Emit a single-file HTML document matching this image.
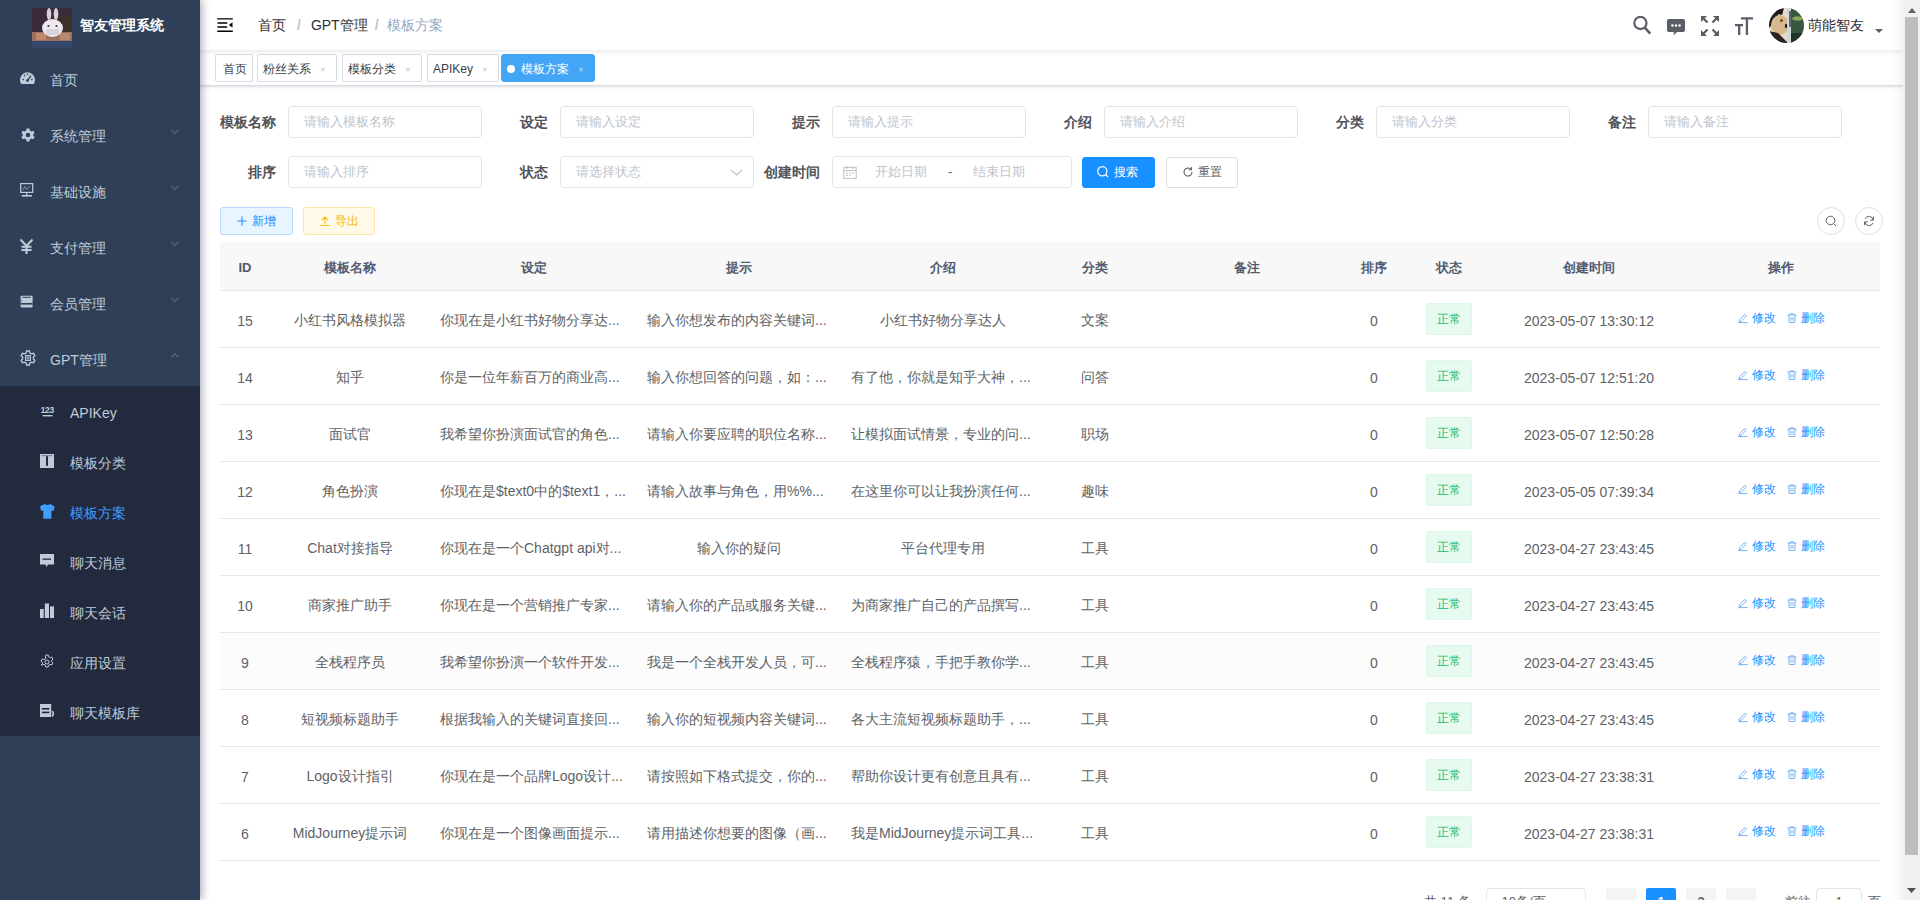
<!DOCTYPE html>
<html lang="zh">
<head>
<meta charset="utf-8">
<title>模板方案</title>
<style>
*{box-sizing:border-box;margin:0;padding:0}
html,body{width:1920px;height:900px;overflow:hidden;background:#fff}
body{font-family:"Liberation Sans",sans-serif;font-size:14px;color:#606266;position:relative}
svg{display:block}
/* ---------- sidebar ---------- */
#sb{position:absolute;left:0;top:0;width:200px;height:900px;background:#2e3f57;box-shadow:2px 0 8px rgba(0,21,41,.35);z-index:5}
#logo{position:absolute;left:0;top:0;width:200px;height:50px}
#logo .img{position:absolute;left:32px;top:8px;width:40px;height:40px}
#logo .t{position:absolute;left:80px;top:0;line-height:50px;font-size:14px;font-weight:700;color:#fff;white-space:nowrap}
.mi{position:absolute;left:0;width:200px;height:56px;color:#bfcbd9;font-size:14px}
.mi .ic{position:absolute;left:20px;top:21px;width:16px;height:16px}
.mi .tx{position:absolute;left:50px;top:2px;line-height:56px;white-space:nowrap}
.mi .ar{position:absolute;left:170px;top:22px;width:10px;height:7px}
#sub{position:absolute;left:0;top:386px;width:200px;height:350px;background:#232a3e}
.si{position:absolute;left:0;width:200px;height:50px;color:#bfcbd9;font-size:14px}
.si .ic{position:absolute;left:40px;top:17px;width:16px;height:16px}
.si .tx{position:absolute;left:70px;top:2px;line-height:50px;white-space:nowrap}
.si.act{color:#409eff}
/* ---------- navbar ---------- */
#nav{position:absolute;left:200px;top:0;width:1703px;height:50px;background:#fff;box-shadow:0 1px 5px rgba(0,21,41,.12);z-index:3}
#ham{position:absolute;left:15px;top:15px;width:20px;height:20px}
#bc{position:absolute;left:58px;top:0;line-height:50px;font-size:14px;white-space:nowrap}
#bc .a{color:#303133}
#bc .s{color:#c0c4cc;margin:0 9px;font-weight:700}
#bc .l{color:#97a8be}
.ni{position:absolute;top:16px;width:18px;height:18px;color:#5a5e66}
#avatar{position:absolute;left:1569px;top:8px;width:35px;height:35px;border-radius:50%;overflow:hidden}
#uname{position:absolute;left:1608px;top:0;line-height:50px;font-size:14px;color:#303133;white-space:nowrap}
#caret{position:absolute;left:1675px;top:29px;width:0;height:0;border-left:4.5px solid transparent;border-right:4.5px solid transparent;border-top:4.5px solid #5a5e66}
/* ---------- tags ---------- */
#tags{position:absolute;left:200px;top:50px;width:1703px;height:36px;background:#fff;border-bottom:1px solid #d8dce5;box-shadow:0 1px 3px 0 rgba(0,0,0,.12),0 0 3px 0 rgba(0,0,0,.04);z-index:2}
.tg{position:absolute;top:4px;height:28px;line-height:29px;border:1px solid #d8dce5;color:#3a3d44;background:#fff;font-size:12px;padding:0 5px;white-space:nowrap;border-radius:2px}
.tg .x{display:inline-block;width:16px;text-align:center;margin-left:4px;color:#c8c8c8;font-size:7px;vertical-align:1px}
.tg.act .x{color:rgba(255,255,255,.65)}
.tg.act{background:#42a5f5;border-color:#42a5f5;color:#fff;border-radius:3px}
.tg.act .dot{display:inline-block;width:8px;height:8px;border-radius:50%;background:#fff;margin-right:6px;vertical-align:-0px}
/* ---------- main ---------- */
#main{position:absolute;left:200px;top:86px;width:1703px;height:814px;background:#fff}
.lb{position:absolute;width:68px;text-align:right;padding-right:12px;line-height:32px;font-size:14px;font-weight:700;color:#50535a;white-space:nowrap}
.in{position:absolute;height:32px;border:1px solid #e1e4ea;border-radius:4px;background:#fff;line-height:30px;padding-left:15px;font-size:13px;color:#c0c4cc;white-space:nowrap;font-weight:350}
.btn{position:absolute;height:28px;border-radius:3px;font-size:12px;line-height:26px;text-align:center;white-space:nowrap;border:1px solid #dcdfe6}
/* ---------- table ---------- */
#tbl{position:absolute;left:20px;top:156px;width:1663px;border-collapse:collapse;table-layout:fixed}
#tbl th{height:48px;background:#f8f8f9;color:#515a6e;font-size:13px;font-weight:700;border-bottom:1px solid #e6e8eb;padding:0;text-align:center}
#tbl td{height:57px;border-bottom:1px solid #e6e8eb;padding:0;text-align:center;font-size:14px;color:#606266;font-weight:350}
#tbl tr.hl td{background:#fcfcfc}
.cell{padding:0 10px;white-space:nowrap;overflow:hidden;position:relative;top:2px}
.cell.nt{top:0}
#tbl td .cell.l{text-align:left}
.tag{display:inline-block;height:32px;line-height:30px;padding:0 10px;border:1px solid #dcf7e8;background:#e7faf0;color:#1cbc6c;font-size:12px;border-radius:2px;vertical-align:middle}
.ops{font-size:12px;color:#1890ff;top:0 !important}
.op{display:inline-block;white-space:nowrap}
.op2{margin-left:10px}
.ai{display:inline-block;width:12px;height:12px;vertical-align:-2px;margin-right:3px;color:#6aa8ee}
/* ---------- pagination ---------- */
.pg{position:absolute;top:802px;height:28px;line-height:28px;font-size:13px;color:#606266;white-space:nowrap}
.pb{position:absolute;top:802px;width:30px;height:28px;line-height:28px;text-align:center;background:#f4f4f5;border-radius:2px;font-size:13px;font-weight:700;color:#606266}
/* ---------- scrollbar ---------- */
#scr{position:absolute;left:1903px;top:0;width:17px;height:900px;background:#f1f1f1;z-index:10}
#thumb{position:absolute;left:2px;top:17px;width:13px;height:838px;background:#bdbdbd}
</style>
</head>
<body>

<!-- sidebar -->
<div id="sb">
  <div id="logo">
    <svg class="img" viewBox="0 0 40 40">
      <rect width="40" height="40" fill="#2c2f45"/>
      <rect x="0" y="0" width="40" height="24" fill="#3a2a3a"/>
      <rect x="26" y="8" width="14" height="16" fill="#3d3028"/>
      <rect x="0" y="24" width="40" height="9" fill="#9c7060"/>
      <rect x="4" y="25" width="10" height="7" fill="#c08a6a"/>
      <rect x="28" y="25" width="10" height="7" fill="#b88a70"/>
      <rect x="0" y="33" width="40" height="7" fill="#34466a"/>
      <ellipse cx="17" cy="6" rx="2.3" ry="6" fill="#d9cfe0"/>
      <ellipse cx="24" cy="6" rx="2.3" ry="6" fill="#d9cfe0"/>
      <ellipse cx="20.5" cy="20" rx="10.5" ry="9" fill="#efe8ef"/>
      <rect x="14" y="21" width="13" height="6" fill="#d8d2dc"/>
      <circle cx="16.5" cy="18" r="1.1" fill="#333"/>
      <circle cx="24.5" cy="18" r="1.1" fill="#333"/>
    </svg>
    <div class="t">智友管理系统</div>
  </div>

  <div class="mi" style="top:50px">
    <svg class="ic" viewBox="0 0 16 16"><path d="M1.2 12.9 A7.5 7.5 0 1 1 13.8 12.9 Z" fill="#bfcbd9"/><path d="M7.5 9.6 L11 4.6" stroke="#2e3f57" stroke-width="1.4"/><circle cx="7.5" cy="9.6" r="1.4" fill="#2e3f57"/><circle cx="3.2" cy="8.6" r=".8" fill="#2e3f57"/><circle cx="4.6" cy="4.6" r=".8" fill="#2e3f57"/><circle cx="11.9" cy="8.6" r=".8" fill="#2e3f57"/><circle cx="7.5" cy="3.2" r=".8" fill="#2e3f57"/></svg>
    <span class="tx">首页</span>
  </div>
  <div class="mi" style="top:106px">
    <svg class="ic" viewBox="0 0 16 16"><path d="M6.6 1.5h2.8l.4 2 1.5.9 1.9-.7 1.4 2.4-1.5 1.3v1.2l1.5 1.3-1.4 2.4-1.9-.7-1.5.9-.4 2H6.6l-.4-2-1.5-.9-1.9.7-1.4-2.4 1.5-1.3V7.4L1.4 6.1l1.4-2.4 1.9.7 1.5-.9z" fill="#bfcbd9"/><circle cx="8" cy="8" r="2.3" fill="#2e3f57"/></svg>
    <span class="tx">系统管理</span>
    <svg class="ar" viewBox="0 0 11 8"><path d="M1.5 2 L5.5 6 L9.5 2" fill="none" stroke="#56657b" stroke-width="1.5"/></svg>
  </div>
  <div class="mi" style="top:162px">
    <svg class="ic" viewBox="0 0 16 16"><rect x="0.7" y="0.6" width="12" height="8.8" fill="none" stroke="#bfcbd9" stroke-width="1.2"/><path d="M3 7 L5 3.5 L7 6.5 L10 3" fill="none" stroke="#bfcbd9" stroke-width=".9" opacity=".7"/><rect x="6.1" y="9.4" width="1.2" height="2.6" fill="#bfcbd9"/><rect x="1.7" y="12" width="10.2" height="1.6" fill="#bfcbd9"/></svg>
    <span class="tx">基础设施</span>
    <svg class="ar" viewBox="0 0 11 8"><path d="M1.5 2 L5.5 6 L9.5 2" fill="none" stroke="#56657b" stroke-width="1.5"/></svg>
  </div>
  <div class="mi" style="top:218px">
    <svg class="ic" viewBox="0 0 16 16"><path d="M0.5 0.5 L6.5 7 L12.5 0.5 M6.5 7 V15 M1.5 7.8 H11.5 M1.5 11 H11.5" fill="none" stroke="#bfcbd9" stroke-width="2.1"/></svg>
    <span class="tx">支付管理</span>
    <svg class="ar" viewBox="0 0 11 8"><path d="M1.5 2 L5.5 6 L9.5 2" fill="none" stroke="#56657b" stroke-width="1.5"/></svg>
  </div>
  <div class="mi" style="top:274px">
    <svg class="ic" viewBox="0 0 16 16"><rect x="0.6" y="0.8" width="12" height="11.8" rx="1" fill="#bfcbd9"/><rect x="2.4" y="1.8" width="8.4" height="1" fill="#2e3f57"/><rect x="0.6" y="8" width="12" height="1.6" fill="#2e3f57"/><rect x="0.6" y="5.2" width="1.6" height="1.2" fill="#2e3f57" opacity=".6"/></svg>
    <span class="tx">会员管理</span>
    <svg class="ar" viewBox="0 0 11 8"><path d="M1.5 2 L5.5 6 L9.5 2" fill="none" stroke="#56657b" stroke-width="1.5"/></svg>
  </div>
  <div class="mi" style="top:330px">
    <svg class="ic" viewBox="-1 -1 16 16" style="top:20px"><path d="M5.6 0h2.8l.5 2 1.6.9 2-.6 1.4 2.4-1.5 1.4v1.8l1.5 1.4-1.4 2.4-2-.6-1.6.9-.5 2H5.6l-.5-2-1.6-.9-2 .6L.1 9.3l1.5-1.4V6.1L.1 4.7l1.4-2.4 2 .6 1.6-.9z" fill="none" stroke="#bfcbd9" stroke-width="1.3"/><rect x="4.6" y="4.6" width="4.8" height="4.8" fill="none" stroke="#bfcbd9" stroke-width="1.1"/><path d="M7 4.6 V9.4 M4.6 7 H9.4" stroke="#bfcbd9" stroke-width=".8"/></svg>
    <span class="tx">GPT管理</span>
    <svg class="ar" viewBox="0 0 11 8"><path d="M1.5 6 L5.5 2 L9.5 6" fill="none" stroke="#56657b" stroke-width="1.5"/></svg>
  </div>

  <div id="sub">
    <div class="si" style="top:0">
      <svg class="ic" viewBox="0 0 16 16"><text x="7" y="10" text-anchor="middle" font-family="Liberation Sans" font-weight="700" font-size="9" letter-spacing="-0.6" fill="#bfcbd9">123</text><rect x="2.7" y="12" width="9.8" height="1.4" fill="#bfcbd9"/></svg>
      <span class="tx">APIKey</span>
    </div>
    <div class="si" style="top:50px">
      <svg class="ic" viewBox="0 0 16 16"><rect x="0" y="1" width="14" height="14" fill="#bfcbd9"/><rect x="6" y="3.2" width="2" height="9.6" fill="#232a3e"/><rect x="1.4" y="2.2" width="11.2" height="1" fill="#232a3e" opacity=".5"/></svg>
      <span class="tx">模板分类</span>
    </div>
    <div class="si act" style="top:100px">
      <svg class="ic" viewBox="0 0 16 16"><path d="M4.5 1 L0 3.5 L1.2 8 L3.3 7.4 V15.8 H11.4 V7.4 L13.5 8 L14.7 3.5 L10.2 1 Q7.35 3.2 4.5 1 Z" fill="#409eff"/></svg>
      <span class="tx">模板方案</span>
    </div>
    <div class="si" style="top:150px">
      <svg class="ic" viewBox="0 0 16 16"><path d="M0 1 H14 V11.5 H8 L6.5 14 L5.5 11.5 H0 Z" fill="#bfcbd9"/><rect x="2.5" y="5.4" width="8.5" height="1.6" fill="#232a3e" opacity=".8"/></svg>
      <span class="tx">聊天消息</span>
    </div>
    <div class="si" style="top:200px">
      <svg class="ic" viewBox="0 0 16 16"><rect x="0" y="6" width="3.7" height="9" fill="#bfcbd9"/><rect x="4.8" y="0.5" width="4.2" height="14.5" fill="#bfcbd9"/><rect x="10" y="3.4" width="4" height="11.6" fill="#bfcbd9"/></svg>
      <span class="tx">聊天会话</span>
    </div>
    <div class="si" style="top:250px">
      <svg class="ic" viewBox="0 -2 16 16"><path d="M5.8 0h2.4l.4 1.8 1.4.8 1.8-.6 1.2 2.1-1.4 1.2v1.4l1.4 1.2-1.2 2.1-1.8-.6-1.4.8-.4 1.8H5.8l-.4-1.8-1.4-.8-1.8.6L1 9.9l1.4-1.2V7.3L1 6.1 2.2 4l1.8.6 1.4-.8z" fill="none" stroke="#bfcbd9" stroke-width="1"/><circle cx="7" cy="7" r="2" fill="none" stroke="#bfcbd9" stroke-width="1"/></svg>
      <span class="tx">应用设置</span>
    </div>
    <div class="si" style="top:300px">
      <svg class="ic" viewBox="0 0 16 16"><path d="M0 1 H11.2 V14 H0 Z" fill="#bfcbd9"/><rect x="1.8" y="5" width="7.5" height="1.6" fill="#232a3e"/><rect x="1.8" y="8.6" width="7.5" height="1.6" fill="#232a3e"/><path d="M12 8 Q14.5 10 12.2 13.5" fill="none" stroke="#bfcbd9" stroke-width="1.6"/></svg>
      <span class="tx">聊天模板库</span>
    </div>
  </div>
</div>

<!-- navbar -->
<div id="nav">
  <svg id="ham" viewBox="0 0 1024 1024" style="transform:rotate(180deg)"><path fill="#000" d="M408 442h480c4.4 0 8-3.6 8-8v-56c0-4.4-3.6-8-8-8H408c-4.4 0-8 3.6-8 8v56c0 4.4 3.6 8 8 8zm-8 204c0 4.4 3.6 8 8 8h480c4.4 0 8-3.6 8-8v-56c0-4.4-3.6-8-8-8H408c-4.4 0-8 3.6-8 8v56zm504-486H120c-4.4 0-8 3.6-8 8v56c0 4.4 3.6 8 8 8h784c4.4 0 8-3.6 8-8v-56c0-4.4-3.6-8-8-8zm0 632H120c-4.4 0-8 3.6-8 8v56c0 4.4 3.6 8 8 8h784c4.4 0 8-3.6 8-8v-56c0-4.4-3.6-8-8-8zM142.4 642.1L298.7 519a8.840 8.840 0 0 0 0-13.900L142.4 381.900c-5.800-4.600-14.400-.500-14.400 6.900v246.300a8.900 8.900 0 0 0 14.400 7z"/></svg>
  <div id="bc"><span class="a">首页</span><span class="s" style="margin:0 10px 0 11px">/</span><span class="a">GPT管理</span><span class="s" style="margin:0 8px 0 7px">/</span><span class="l">模板方案</span></div>

  <svg class="ni" style="left:1433px;height:20px" viewBox="0 0 18 20"><circle cx="7.4" cy="7" r="6.1" fill="none" stroke="#5a5e66" stroke-width="2.2"/><path d="M11.6 11.4 L17.2 17.6" stroke="#5a5e66" stroke-width="2.6"/></svg>
  <svg class="ni" style="left:1467px;height:20px" viewBox="0 0 18 20"><path d="M1.8 3 H16.2 Q18 3 18 4.8 V14.2 Q18 16 16.2 16 H10 L6.8 19.2 V16 H1.8 Q0 16 0 14.2 V4.8 Q0 3 1.8 3 Z" fill="#5a5e66"/><circle cx="5.4" cy="9.5" r="1.2" fill="#fff"/><circle cx="9" cy="9.5" r="1.2" fill="#fff"/><circle cx="12.6" cy="9.5" r="1.2" fill="#fff"/></svg>
  <svg class="ni" style="left:1501px;height:20px" viewBox="0 0 18 20"><path d="M1.2 1.2 L6.5 6.5 M16.8 1.2 L11.5 6.5 M1.2 18.8 L6.5 13.5 M16.8 18.8 L11.5 13.5" stroke="#5a5e66" stroke-width="2.2"/><path d="M0 0 H6 L0 6 Z M18 0 H12 L18 6 Z M0 20 H6 L0 14 Z M18 20 H12 L18 14 Z" fill="#5a5e66"/></svg>
  <svg class="ni" style="left:1535px;height:20px" viewBox="0 0 18 20"><path d="M6 2.4 H18 M11.9 2 V19 M0 9.2 H8 M4.2 8.4 V19" fill="none" stroke="#5a5e66" stroke-width="2.3"/></svg>

  <svg id="avatar" viewBox="0 0 35 35">
    <rect width="35" height="35" fill="#e6dccb"/>
    <path d="M0 0 H12 L7 12 L0 20 Z" fill="#1e1c1c"/>
    <ellipse cx="11" cy="17" rx="9" ry="10" fill="#d8b98e"/>
    <path d="M8 1 L15 0 L13 7 L9 6 Z" fill="#1a1a1a"/>
    <path d="M0 23 L9 25 L19 35 H0 Z" fill="#2b231e"/>
    <circle cx="12.5" cy="12.5" r="1.3" fill="#4a3020"/>
    <circle cx="18" cy="18" r="2.2" fill="#141414"/>
    <rect x="18" y="0" width="5" height="35" fill="#cfd9dc"/>
    <rect x="20" y="3" width="3" height="16" fill="#5f6a6e"/>
    <rect x="22" y="0" width="13" height="35" fill="#39573f"/>
    <ellipse cx="28.5" cy="10.5" rx="5.5" ry="2.2" fill="#8aa65a"/>
    <rect x="22" y="25" width="13" height="10" fill="#1f3329"/>
  </svg>
  <div id="uname">萌能智友</div>
  <div id="caret"></div>
</div>

<!-- tags -->
<div id="tags">
  <div class="tg" style="left:15px;padding:0 5px 0 7px">首页</div>
  <div class="tg" style="left:57px">粉丝关系<span class="x">✕</span></div>
  <div class="tg" style="left:142px">模板分类<span class="x">✕</span></div>
  <div class="tg" style="left:227px">APIKey<span class="x">✕</span></div>
  <div class="tg act" style="left:301px"><span class="dot"></span>模板方案<span class="x">✕</span></div>
</div>

<!-- main -->
<div id="main">
  <!-- form row 1 -->
  <div class="lb" style="left:20px;top:20px">模板名称</div><div class="in" style="left:88px;top:20px;width:194px">请输入模板名称</div>
  <div class="lb" style="left:292px;top:20px">设定</div><div class="in" style="left:360px;top:20px;width:194px">请输入设定</div>
  <div class="lb" style="left:564px;top:20px">提示</div><div class="in" style="left:632px;top:20px;width:194px">请输入提示</div>
  <div class="lb" style="left:836px;top:20px">介绍</div><div class="in" style="left:904px;top:20px;width:194px">请输入介绍</div>
  <div class="lb" style="left:1108px;top:20px">分类</div><div class="in" style="left:1176px;top:20px;width:194px">请输入分类</div>
  <div class="lb" style="left:1380px;top:20px">备注</div><div class="in" style="left:1448px;top:20px;width:194px">请输入备注</div>
  <!-- form row 2 -->
  <div class="lb" style="left:20px;top:70px">排序</div><div class="in" style="left:88px;top:70px;width:194px">请输入排序</div>
  <div class="lb" style="left:292px;top:70px">状态</div><div class="in" style="left:360px;top:70px;width:194px">请选择状态
    <svg style="position:absolute;right:10px;top:12px;width:13px;height:7px" viewBox="0 0 13 7"><path d="M1 1 L6.5 6 L12 1" fill="none" stroke="#c0c4cc" stroke-width="1.2"/></svg></div>
  <div class="lb" style="left:564px;top:70px">创建时间</div>
  <div class="in" style="left:632px;top:70px;width:240px;padding-left:10px">
    <svg style="position:absolute;left:10px;top:9px;width:14px;height:13px" viewBox="0 0 14 13"><rect x="0.8" y="1.5" width="12.4" height="11" fill="none" stroke="#c0c4cc" stroke-width="1.1"/><path d="M0.8 4.5 H13.2 M4 0 V3 M10 0 V3 M3 7 H5 M6 7 H8 M9 7 H11 M3 9.5 H5 M6 9.5 H8" stroke="#c0c4cc" stroke-width="1"/></svg>
    <span style="position:absolute;left:42px;top:0">开始日期</span>
    <span style="position:absolute;left:115px;top:0;color:#606266">-</span>
    <span style="position:absolute;left:140px;top:0">结束日期</span>
  </div>
  <div class="btn" style="left:882px;top:71px;width:73px;height:31px;line-height:29px;background:#1890ff;border-color:#1890ff;color:#fff">
    <svg style="display:inline-block;width:12px;height:12px;vertical-align:-2px;margin-right:5px;margin-left:-3px" viewBox="0 0 12 12"><circle cx="5.3" cy="5.3" r="4.6" fill="none" stroke="#fff" stroke-width="1.2"/><path d="M8.4 8.4 L11 11" stroke="#fff" stroke-width="1.2"/></svg>搜索</div>
  <div class="btn" style="left:966px;top:71px;width:72px;height:31px;line-height:29px;background:#fff;color:#606266">
    <svg style="display:inline-block;width:12px;height:12px;vertical-align:-2px;margin-right:4px" viewBox="0 0 12 12"><path d="M10 6 A4 4 0 1 1 8.8 3.2" fill="none" stroke="#606266" stroke-width="1.1"/><path d="M9.5 1 V3.8 H6.8" fill="none" stroke="#606266" stroke-width="1.1"/></svg>重置</div>

  <!-- toolbar -->
  <div class="btn" style="left:20px;top:121px;width:73px;background:#e8f4ff;border-color:#b8dafc;color:#1890ff">
    <svg style="display:inline-block;width:10px;height:10px;vertical-align:-1px;margin-right:5px" viewBox="0 0 10 10"><path d="M5 0.5 V9.5 M0.5 5 H9.5" stroke="#1890ff" stroke-width="1.1"/></svg>新增</div>
  <div class="btn" style="left:103px;top:121px;width:72px;background:#fffae8;border-color:#ffe6a8;color:#f5b400">
    <svg style="display:inline-block;width:10px;height:10px;vertical-align:-1px;margin-right:5px" viewBox="0 0 10 10"><path d="M5 8 V1 M2 4 L5 1 L8 4 M0.5 9.5 H9.5" fill="none" stroke="#ffba00" stroke-width="1.1"/></svg>导出</div>
  <div class="btn" style="left:1617px;top:121px;width:28px;border-radius:50%;background:#fff">
    <svg style="position:absolute;left:7px;top:7px;width:12px;height:12px" viewBox="0 0 12 12"><circle cx="5.5" cy="5.5" r="4.3" fill="none" stroke="#606266" stroke-width="1"/><path d="M8.6 8.6 L11 11" stroke="#606266" stroke-width="1"/></svg></div>
  <div class="btn" style="left:1655px;top:121px;width:28px;border-radius:50%;background:#fff">
    <svg style="position:absolute;left:7px;top:7px;width:12px;height:12px" viewBox="0 0 12 12"><path d="M10.2 5 A4.3 4.3 0 0 0 2 4 M1.8 7 A4.3 4.3 0 0 0 10 8" fill="none" stroke="#606266" stroke-width="1"/><path d="M10.5 1.8 V5.2 H7.2 M1.5 10.2 V6.8 H4.8" fill="none" stroke="#606266" stroke-width="1"/></svg></div>

  <table id="tbl">
    <colgroup><col style="width:50px"><col style="width:160px"><col style="width:207px"><col style="width:204px"><col style="width:204px"><col style="width:100px"><col style="width:204px"><col style="width:50px"><col style="width:100px"><col style="width:180px"><col style="width:204px"></colgroup>
    <thead><tr><th><div class="cell">ID</div></th><th><div class="cell">模板名称</div></th><th><div class="cell">设定</div></th><th><div class="cell">提示</div></th><th><div class="cell">介绍</div></th><th><div class="cell">分类</div></th><th><div class="cell">备注</div></th><th><div class="cell">排序</div></th><th><div class="cell">状态</div></th><th><div class="cell">创建时间</div></th><th><div class="cell">操作</div></th></tr></thead>
    <tbody>
<tr><td><div class="cell">15</div></td><td><div class="cell">小红书风格模拟器</div></td><td><div class="cell l">你现在是小红书好物分享达...</div></td><td><div class="cell l">输入你想发布的内容关键词...</div></td><td><div class="cell">小红书好物分享达人</div></td><td><div class="cell">文案</div></td><td><div class="cell"></div></td><td><div class="cell">0</div></td><td><div class="cell nt"><span class="tag">正常</span></div></td><td><div class="cell">2023-05-07 13:30:12</div></td><td><div class="cell ops"><span class="op"><svg class="ai" viewBox="0 0 12 12"><path d="M2.2 9.6 L2.6 7.6 L7.8 2.4 L9.4 4 L4.2 9.2 Z M1.2 10.6 H10.6" fill="none" stroke="currentColor" stroke-width="0.9"/></svg>修改</span><span class="op op2"><svg class="ai" viewBox="0 0 12 12"><path d="M1.5 3 H10.5 M4.5 3 V1.8 H7.5 V3 M2.8 3 L3.2 10.5 H8.8 L9.2 3 M5 5 V8.8 M7 5 V8.8" fill="none" stroke="currentColor" stroke-width="0.9"/></svg>删除</span></div></td></tr>
<tr><td><div class="cell">14</div></td><td><div class="cell">知乎</div></td><td><div class="cell l">你是一位年薪百万的商业高...</div></td><td><div class="cell l">输入你想回答的问题，如：...</div></td><td><div class="cell l">有了他，你就是知乎大神，...</div></td><td><div class="cell">问答</div></td><td><div class="cell"></div></td><td><div class="cell">0</div></td><td><div class="cell nt"><span class="tag">正常</span></div></td><td><div class="cell">2023-05-07 12:51:20</div></td><td><div class="cell ops"><span class="op"><svg class="ai" viewBox="0 0 12 12"><path d="M2.2 9.6 L2.6 7.6 L7.8 2.4 L9.4 4 L4.2 9.2 Z M1.2 10.6 H10.6" fill="none" stroke="currentColor" stroke-width="0.9"/></svg>修改</span><span class="op op2"><svg class="ai" viewBox="0 0 12 12"><path d="M1.5 3 H10.5 M4.5 3 V1.8 H7.5 V3 M2.8 3 L3.2 10.5 H8.8 L9.2 3 M5 5 V8.8 M7 5 V8.8" fill="none" stroke="currentColor" stroke-width="0.9"/></svg>删除</span></div></td></tr>
<tr><td><div class="cell">13</div></td><td><div class="cell">面试官</div></td><td><div class="cell l">我希望你扮演面试官的角色...</div></td><td><div class="cell l">请输入你要应聘的职位名称...</div></td><td><div class="cell l">让模拟面试情景，专业的问...</div></td><td><div class="cell">职场</div></td><td><div class="cell"></div></td><td><div class="cell">0</div></td><td><div class="cell nt"><span class="tag">正常</span></div></td><td><div class="cell">2023-05-07 12:50:28</div></td><td><div class="cell ops"><span class="op"><svg class="ai" viewBox="0 0 12 12"><path d="M2.2 9.6 L2.6 7.6 L7.8 2.4 L9.4 4 L4.2 9.2 Z M1.2 10.6 H10.6" fill="none" stroke="currentColor" stroke-width="0.9"/></svg>修改</span><span class="op op2"><svg class="ai" viewBox="0 0 12 12"><path d="M1.5 3 H10.5 M4.5 3 V1.8 H7.5 V3 M2.8 3 L3.2 10.5 H8.8 L9.2 3 M5 5 V8.8 M7 5 V8.8" fill="none" stroke="currentColor" stroke-width="0.9"/></svg>删除</span></div></td></tr>
<tr><td><div class="cell">12</div></td><td><div class="cell">角色扮演</div></td><td><div class="cell l">你现在是$text0中的$text1，...</div></td><td><div class="cell l">请输入故事与角色，用%%...</div></td><td><div class="cell l">在这里你可以让我扮演任何...</div></td><td><div class="cell">趣味</div></td><td><div class="cell"></div></td><td><div class="cell">0</div></td><td><div class="cell nt"><span class="tag">正常</span></div></td><td><div class="cell">2023-05-05 07:39:34</div></td><td><div class="cell ops"><span class="op"><svg class="ai" viewBox="0 0 12 12"><path d="M2.2 9.6 L2.6 7.6 L7.8 2.4 L9.4 4 L4.2 9.2 Z M1.2 10.6 H10.6" fill="none" stroke="currentColor" stroke-width="0.9"/></svg>修改</span><span class="op op2"><svg class="ai" viewBox="0 0 12 12"><path d="M1.5 3 H10.5 M4.5 3 V1.8 H7.5 V3 M2.8 3 L3.2 10.5 H8.8 L9.2 3 M5 5 V8.8 M7 5 V8.8" fill="none" stroke="currentColor" stroke-width="0.9"/></svg>删除</span></div></td></tr>
<tr><td><div class="cell">11</div></td><td><div class="cell">Chat对接指导</div></td><td><div class="cell l">你现在是一个Chatgpt api对...</div></td><td><div class="cell">输入你的疑问</div></td><td><div class="cell">平台代理专用</div></td><td><div class="cell">工具</div></td><td><div class="cell"></div></td><td><div class="cell">0</div></td><td><div class="cell nt"><span class="tag">正常</span></div></td><td><div class="cell">2023-04-27 23:43:45</div></td><td><div class="cell ops"><span class="op"><svg class="ai" viewBox="0 0 12 12"><path d="M2.2 9.6 L2.6 7.6 L7.8 2.4 L9.4 4 L4.2 9.2 Z M1.2 10.6 H10.6" fill="none" stroke="currentColor" stroke-width="0.9"/></svg>修改</span><span class="op op2"><svg class="ai" viewBox="0 0 12 12"><path d="M1.5 3 H10.5 M4.5 3 V1.8 H7.5 V3 M2.8 3 L3.2 10.5 H8.8 L9.2 3 M5 5 V8.8 M7 5 V8.8" fill="none" stroke="currentColor" stroke-width="0.9"/></svg>删除</span></div></td></tr>
<tr><td><div class="cell">10</div></td><td><div class="cell">商家推广助手</div></td><td><div class="cell l">你现在是一个营销推广专家...</div></td><td><div class="cell l">请输入你的产品或服务关键...</div></td><td><div class="cell l">为商家推广自己的产品撰写...</div></td><td><div class="cell">工具</div></td><td><div class="cell"></div></td><td><div class="cell">0</div></td><td><div class="cell nt"><span class="tag">正常</span></div></td><td><div class="cell">2023-04-27 23:43:45</div></td><td><div class="cell ops"><span class="op"><svg class="ai" viewBox="0 0 12 12"><path d="M2.2 9.6 L2.6 7.6 L7.8 2.4 L9.4 4 L4.2 9.2 Z M1.2 10.6 H10.6" fill="none" stroke="currentColor" stroke-width="0.9"/></svg>修改</span><span class="op op2"><svg class="ai" viewBox="0 0 12 12"><path d="M1.5 3 H10.5 M4.5 3 V1.8 H7.5 V3 M2.8 3 L3.2 10.5 H8.8 L9.2 3 M5 5 V8.8 M7 5 V8.8" fill="none" stroke="currentColor" stroke-width="0.9"/></svg>删除</span></div></td></tr>
<tr class="hl"><td><div class="cell">9</div></td><td><div class="cell">全栈程序员</div></td><td><div class="cell l">我希望你扮演一个软件开发...</div></td><td><div class="cell l">我是一个全栈开发人员，可...</div></td><td><div class="cell l">全栈程序猿，手把手教你学...</div></td><td><div class="cell">工具</div></td><td><div class="cell"></div></td><td><div class="cell">0</div></td><td><div class="cell nt"><span class="tag">正常</span></div></td><td><div class="cell">2023-04-27 23:43:45</div></td><td><div class="cell ops"><span class="op"><svg class="ai" viewBox="0 0 12 12"><path d="M2.2 9.6 L2.6 7.6 L7.8 2.4 L9.4 4 L4.2 9.2 Z M1.2 10.6 H10.6" fill="none" stroke="currentColor" stroke-width="0.9"/></svg>修改</span><span class="op op2"><svg class="ai" viewBox="0 0 12 12"><path d="M1.5 3 H10.5 M4.5 3 V1.8 H7.5 V3 M2.8 3 L3.2 10.5 H8.8 L9.2 3 M5 5 V8.8 M7 5 V8.8" fill="none" stroke="currentColor" stroke-width="0.9"/></svg>删除</span></div></td></tr>
<tr><td><div class="cell">8</div></td><td><div class="cell">短视频标题助手</div></td><td><div class="cell l">根据我输入的关键词直接回...</div></td><td><div class="cell l">输入你的短视频内容关键词...</div></td><td><div class="cell l">各大主流短视频标题助手，...</div></td><td><div class="cell">工具</div></td><td><div class="cell"></div></td><td><div class="cell">0</div></td><td><div class="cell nt"><span class="tag">正常</span></div></td><td><div class="cell">2023-04-27 23:43:45</div></td><td><div class="cell ops"><span class="op"><svg class="ai" viewBox="0 0 12 12"><path d="M2.2 9.6 L2.6 7.6 L7.8 2.4 L9.4 4 L4.2 9.2 Z M1.2 10.6 H10.6" fill="none" stroke="currentColor" stroke-width="0.9"/></svg>修改</span><span class="op op2"><svg class="ai" viewBox="0 0 12 12"><path d="M1.5 3 H10.5 M4.5 3 V1.8 H7.5 V3 M2.8 3 L3.2 10.5 H8.8 L9.2 3 M5 5 V8.8 M7 5 V8.8" fill="none" stroke="currentColor" stroke-width="0.9"/></svg>删除</span></div></td></tr>
<tr><td><div class="cell">7</div></td><td><div class="cell">Logo设计指引</div></td><td><div class="cell l">你现在是一个品牌Logo设计...</div></td><td><div class="cell l">请按照如下格式提交，你的...</div></td><td><div class="cell l">帮助你设计更有创意且具有...</div></td><td><div class="cell">工具</div></td><td><div class="cell"></div></td><td><div class="cell">0</div></td><td><div class="cell nt"><span class="tag">正常</span></div></td><td><div class="cell">2023-04-27 23:38:31</div></td><td><div class="cell ops"><span class="op"><svg class="ai" viewBox="0 0 12 12"><path d="M2.2 9.6 L2.6 7.6 L7.8 2.4 L9.4 4 L4.2 9.2 Z M1.2 10.6 H10.6" fill="none" stroke="currentColor" stroke-width="0.9"/></svg>修改</span><span class="op op2"><svg class="ai" viewBox="0 0 12 12"><path d="M1.5 3 H10.5 M4.5 3 V1.8 H7.5 V3 M2.8 3 L3.2 10.5 H8.8 L9.2 3 M5 5 V8.8 M7 5 V8.8" fill="none" stroke="currentColor" stroke-width="0.9"/></svg>删除</span></div></td></tr>
<tr><td><div class="cell">6</div></td><td><div class="cell">MidJourney提示词</div></td><td><div class="cell l">你现在是一个图像画面提示...</div></td><td><div class="cell l">请用描述你想要的图像（画...</div></td><td><div class="cell l">我是MidJourney提示词工具...</div></td><td><div class="cell">工具</div></td><td><div class="cell"></div></td><td><div class="cell">0</div></td><td><div class="cell nt"><span class="tag">正常</span></div></td><td><div class="cell">2023-04-27 23:38:31</div></td><td><div class="cell ops"><span class="op"><svg class="ai" viewBox="0 0 12 12"><path d="M2.2 9.6 L2.6 7.6 L7.8 2.4 L9.4 4 L4.2 9.2 Z M1.2 10.6 H10.6" fill="none" stroke="currentColor" stroke-width="0.9"/></svg>修改</span><span class="op op2"><svg class="ai" viewBox="0 0 12 12"><path d="M1.5 3 H10.5 M4.5 3 V1.8 H7.5 V3 M2.8 3 L3.2 10.5 H8.8 L9.2 3 M5 5 V8.8 M7 5 V8.8" fill="none" stroke="currentColor" stroke-width="0.9"/></svg>删除</span></div></td></tr>
    </tbody>
  </table>

  <div style="position:absolute;left:1680px;top:156px;width:23px;height:620px;background:#fff"></div>
  <!-- pagination -->
  <div class="pg" style="left:1224px">共 11 条</div>
  <div class="in" style="left:1286px;top:802px;width:100px;height:28px;line-height:26px;font-size:13px;color:#606266;padding-left:0;padding-right:25px;text-align:center">10条/页
    <svg style="position:absolute;right:8px;top:10px;width:10px;height:8px" viewBox="0 0 10 8"><path d="M1 2 L5 6 L9 2" fill="none" stroke="#c0c4cc" stroke-width="1.1"/></svg></div>
  <div class="pb" style="left:1406px;color:#c0c4cc">&lsaquo;</div>
  <div class="pb" style="left:1446px;background:#1890ff;color:#fff">1</div>
  <div class="pb" style="left:1486px">2</div>
  <div class="pb" style="left:1526px">&rsaquo;</div>
  <div class="pg" style="left:1585px">前往</div>
  <div class="in" style="left:1616px;top:802px;width:46px;height:28px;line-height:26px;font-size:13px;color:#606266;padding-left:0;text-align:center">1</div>
  <div class="pg" style="left:1668px">页</div>
</div>

<div style="position:absolute;left:1893px;top:0;width:10px;height:900px;background:linear-gradient(to right,rgba(0,0,0,0),rgba(0,0,0,.045));z-index:9"></div>
<!-- scrollbar -->
<div id="scr">
  <svg style="position:absolute;left:4.5px;top:7.5px;width:8px;height:5px" viewBox="0 0 8 5"><path d="M0 5 L4 0 L8 5 Z" fill="#606060"/></svg>
  <div id="thumb"></div>
  <svg style="position:absolute;left:4px;top:888px;width:9px;height:5px" viewBox="0 0 9 5"><path d="M0 0 L4.5 5 L9 0 Z" fill="#505050"/></svg>
</div>

</body>
</html>
